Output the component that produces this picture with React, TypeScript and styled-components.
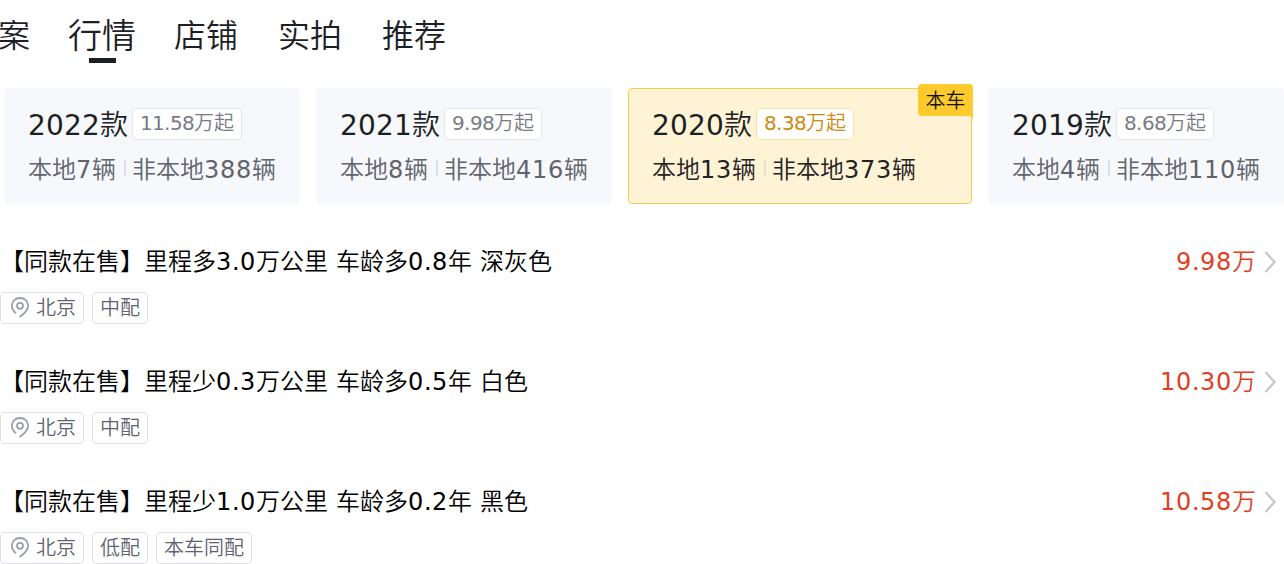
import React from 'react'
import styled, { createGlobalStyle } from 'styled-components'

const GlobalStyle = createGlobalStyle`
  * {
    box-sizing: border-box;
  }

  body {
    margin: 0;
    overflow: hidden;
    background: #fff;
    color: #1c1f23;
    font-family: 'DejaVu Sans', 'Noto Sans CJK SC', sans-serif;
    font-weight: 350;
  }
`

const Page = styled.main`
  width: 1284px;
  height: 564px;
  overflow: hidden;
`

const Tabs = styled.nav`
  display: flex;
  gap: 40px;
  height: 72px;
  margin-left: -2px;
`

const Tab = styled.div<{ $active?: boolean }>`
  position: relative;
  height: 72px;
  margin: 0 ${({ $active }) => ($active ? '-2px' : '0')};
  font-size: ${({ $active }) => ($active ? 34 : 32)}px;
  line-height: 72px;
  white-space: nowrap;
  color: #1c1f26;

  &::after {
    content: '';
    display: ${({ $active }) => ($active ? 'block' : 'none')};
    position: absolute;
    left: 20.5px;
    top: 58px;
    width: 27px;
    height: 5px;
    background: #1c1f26;
  }
`

const Cards = styled.div`
  display: flex;
  gap: 16px;
  padding: 16px 0 0 4px;
`

const Card = styled.section<{ $current?: boolean }>`
  position: relative;
  flex: none;
  width: ${({ $current }) => ($current ? 344 : 296)}px;
  height: 116px;
  padding: 19px 23px 0;
  border: 1px solid ${({ $current }) => ($current ? '#f0cf4e' : '#f7f8fc')};
  border-radius: 4px;
  background: ${({ $current }) => ($current ? '#fff3d6' : '#f7f8fc')};
  color: ${({ $current }) => ($current ? '#222' : '#5f636d')};
`

const CardHead = styled.div`
  display: flex;
  align-items: center;
  gap: 4px;
  height: 32px;
`

const Year = styled.div`
  padding-top: 3px;
  font-size: 28px;
  line-height: 33px;
  white-space: nowrap;
  color: #1c1f23;
`

const PriceTag = styled.div<{ $current?: boolean }>`
  height: 32px;
  padding: 0 7px;
  border: 1px solid ${({ $current }) => ($current ? '#f7e3a4' : '#e2e4ea')};
  border-radius: 4px;
  background: #fff;
  font-size: 20px;
  line-height: 28px;
  white-space: nowrap;
  color: ${({ $current }) => ($current ? '#cc8a0e' : '#777b86')};
`

const Counts = styled.div`
  display: flex;
  align-items: center;
  height: 32px;
  margin-top: 14px;
  font-size: 24px;
  line-height: 32px;
  white-space: nowrap;
`

const Divider = styled.i<{ $current?: boolean }>`
  width: 2px;
  height: 16px;
  margin: -4px 6px 0 8px;
  background: ${({ $current }) => ($current ? '#e9dfca' : '#dfe1e7')};
`

const Ribbon = styled.div`
  position: absolute;
  top: -5px;
  right: -2px;
  width: 55px;
  height: 32px;
  border-radius: 4px 4px 0 4px;
  background: #ffca2c;
  color: #111;
  font-size: 20px;
  line-height: 34px;
  text-align: center;
  white-space: nowrap;
`

const RibbonFold = styled.svg`
  position: absolute;
  top: 32px;
  right: 0;
`

const List = styled.div`
  padding-top: 38px;
`

const Row = styled.article`
  height: 120px;
`

const RowHead = styled.div`
  display: flex;
  align-items: center;
  height: 40px;
  font-size: 24px;
  line-height: 40px;
  white-space: nowrap;
`

const RowTitle = styled.div`
  flex: 1;
  color: #000;
`

const RowPrice = styled.div`
  color: #e0401f;
`

const Chevron = styled.svg`
  flex: none;
  margin: 0 7px 0 8px;
`

const Tags = styled.div`
  display: flex;
  gap: 8px;
  margin-top: 10px;
`

const Tag = styled.div`
  display: flex;
  align-items: center;
  height: 32px;
  padding: 0 7px;
  border: 1px solid #dfe0e8;
  border-radius: 4px;
  font-size: 20px;
  line-height: 30px;
  white-space: nowrap;
  color: #5f6370;
`

const Pin = styled.svg`
  flex: none;
  margin: -2px 4px 0 0;
`

const Glyph = styled.span<{ $width: number }>`
  display: inline-block;
  width: ${({ $width }) => $width}px;
  font-weight: 400;
`

// digits and dots sit on a fixed advance so columns of figures line up
const ADVANCES: { [size: number]: { digit: number; dot: number } } = {
  20: { digit: 12, dot: 6 },
  24: { digit: 16, dot: 8 },
  28: { digit: 18, dot: 9 },
}

interface FiguresProps {
  size: number
  text: string
}

const Figures: React.FC<FiguresProps> = ({ size, text }) => (
  <>
    {text.split(/([\d. ])/).map((part, i) => {
      if (!/^[\d. ]$/.test(part)) return part
      const { digit, dot } = ADVANCES[size]
      return (
        <Glyph key={i} $width={/\d/.test(part) ? digit : dot}>
          {part}
        </Glyph>
      )
    })}
  </>
)

const tabs = ['案', '行情', '店铺', '实拍', '推荐']

const models = [
  { year: '2022款', price: '11.58万起', local: '本地7辆', other: '非本地388辆' },
  { year: '2021款', price: '9.98万起', local: '本地8辆', other: '非本地416辆' },
  { year: '2020款', price: '8.38万起', local: '本地13辆', other: '非本地373辆', current: true },
  { year: '2019款', price: '8.68万起', local: '本地4辆', other: '非本地110辆' },
]

const offers = [
  { title: '【同款在售】里程多3.0万公里 车龄多0.8年 深灰色', price: '9.98万', tags: ['中配'] },
  { title: '【同款在售】里程少0.3万公里 车龄多0.5年 白色', price: '10.30万', tags: ['中配'] },
  { title: '【同款在售】里程少1.0万公里 车龄多0.2年 黑色', price: '10.58万', tags: ['低配', '本车同配'] },
]

const App: React.FC = () => (
  <>
    <GlobalStyle />
    <Page lang="zh-CN">
      <Tabs>
        {tabs.map((tab) => (
          <Tab key={tab} $active={tab === '行情'}>
            {tab}
          </Tab>
        ))}
      </Tabs>
      <Cards>
        {models.map(({ year, price, local, other, current }) => (
          <Card key={year} $current={current}>
            <CardHead>
              <Year>
                <Figures size={28} text={year} />
              </Year>
              <PriceTag $current={current}>
                <Figures size={20} text={price} />
              </PriceTag>
            </CardHead>
            <Counts>
              <span>
                <Figures size={24} text={local} />
              </span>
              <Divider $current={current} />
              <span>
                <Figures size={24} text={other} />
              </span>
            </Counts>
            {current && (
              <Ribbon>
                本车
                <RibbonFold width="4" height="6" viewBox="0 0 4 6">
                  <path d="M0 0H4V6C4 2 2.5 0 0 0Z" fill="#ffca2c" />
                </RibbonFold>
              </Ribbon>
            )}
          </Card>
        ))}
      </Cards>
      <List>
        {offers.map(({ title, price, tags }) => (
          <Row key={title}>
            <RowHead>
              <RowTitle>
                <Figures size={24} text={title} />
              </RowTitle>
              <RowPrice>
                <Figures size={24} text={price} />
              </RowPrice>
              <Chevron width="13" height="24" viewBox="0 0 13 24" fill="none" stroke="#c6c8d2" strokeWidth="2.4">
                <path d="M1.5 2L10.5 12L1.5 22" />
              </Chevron>
            </RowHead>
            <Tags>
              <Tag>
                <Pin width="24" height="24" viewBox="0 0 24 24" fill="none" stroke="#9a9eac" strokeWidth="1.8">
                  <path d="M8 18.2C5.2 16.2 3.9 13.6 3.9 10.7C3.9 6.3 7.4 3 12 3C16.6 3 20.1 6.3 20.1 10.7C20.1 15 16.5 18.5 11.5 22" />
                  <circle cx="12" cy="10.8" r="3" />
                </Pin>
                北京
              </Tag>
              {tags.map((tag) => (
                <Tag key={tag}>{tag}</Tag>
              ))}
            </Tags>
          </Row>
        ))}
      </List>
    </Page>
  </>
)

export default App
